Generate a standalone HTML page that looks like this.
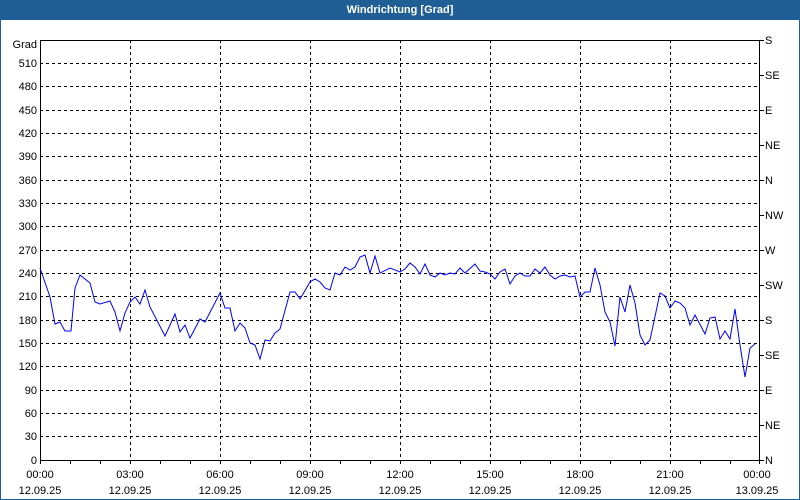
<!DOCTYPE html>
<html><head><meta charset="utf-8"><style>
html,body{margin:0;padding:0;background:#fff}
#w{position:relative;width:798px;height:498px;border:1px solid #1f5f96;overflow:hidden;background:#fff}
#t{height:19px;background:#1f5f96;color:#fff;font:bold 11px "Liberation Sans",sans-serif;text-align:center;line-height:18px}
svg{position:absolute;left:-1px;top:-1px}
text{font-family:"Liberation Sans",sans-serif;font-size:11px;fill:#000}
</style></head><body>
<div id="w"><div id="t">Windrichtung [Grad]</div>
<svg width="800" height="500" viewBox="0 0 800 500">
<g stroke="#000" stroke-width="1" stroke-dasharray="3,3" shape-rendering="crispEdges">
<line x1="40" x2="760" y1="63.5" y2="63.5"/><line x1="40" x2="760" y1="86.5" y2="86.5"/><line x1="40" x2="760" y1="110.5" y2="110.5"/><line x1="40" x2="760" y1="133.5" y2="133.5"/><line x1="40" x2="760" y1="156.5" y2="156.5"/><line x1="40" x2="760" y1="180.5" y2="180.5"/><line x1="40" x2="760" y1="203.5" y2="203.5"/><line x1="40" x2="760" y1="226.5" y2="226.5"/><line x1="40" x2="760" y1="250.5" y2="250.5"/><line x1="40" x2="760" y1="273.5" y2="273.5"/><line x1="40" x2="760" y1="296.5" y2="296.5"/><line x1="40" x2="760" y1="320.5" y2="320.5"/><line x1="40" x2="760" y1="343.5" y2="343.5"/><line x1="40" x2="760" y1="366.5" y2="366.5"/><line x1="40" x2="760" y1="390.5" y2="390.5"/><line x1="40" x2="760" y1="413.5" y2="413.5"/><line x1="40" x2="760" y1="436.5" y2="436.5"/>
<line x1="130.5" x2="130.5" y1="40" y2="460"/><line x1="220.5" x2="220.5" y1="40" y2="460"/><line x1="310.5" x2="310.5" y1="40" y2="460"/><line x1="400.5" x2="400.5" y1="40" y2="460"/><line x1="490.5" x2="490.5" y1="40" y2="460"/><line x1="580.5" x2="580.5" y1="40" y2="460"/><line x1="670.5" x2="670.5" y1="40" y2="460"/>
</g>
<rect x="40.5" y="40.5" width="719" height="420" fill="none" stroke="#000" shape-rendering="crispEdges"/>
<g stroke="#000" shape-rendering="crispEdges">
<path d="M40.5 460v4M70.5 460v4M100.5 460v4M130.5 460v4M160.5 460v4M190.5 460v4M220.5 460v4M250.5 460v4M280.5 460v4M310.5 460v4M340.5 460v4M370.5 460v4M400.5 460v4M430.5 460v4M460.5 460v4M490.5 460v4M520.5 460v4M550.5 460v4M580.5 460v4M610.5 460v4M640.5 460v4M670.5 460v4M700.5 460v4M730.5 460v4M759.5 460v4"/>
<path d="M760 40.5h4M760 75.5h4M760 110.5h4M760 145.5h4M760 180.5h4M760 215.5h4M760 250.5h4M760 285.5h4M760 320.5h4M760 355.5h4M760 390.5h4M760 425.5h4M760 460.5h4"/>
</g>
<polyline fill="none" stroke="#0000ff" stroke-width="1" points="40,268 50,297 55,324 60,322 65,331 71,331 75,288 80,275 90,283 95,302 100,304 110,301 115,312 120,331 125,313 130,302 135,297 140,304 145,290 150,307 165,336 175,314 180,332 185,325 190,338 200,319 205,322 220,293 225,308 230,308 235,331 240,323 245,328 250,343 255,345 260,359 265,340 270,341 275,333 280,329 290,292 295,292 300,299 310,282 315,279 320,282 325,288 330,290 335,273 340,275 345,267 350,270 355,267 360,257 365,255 370,273 375,256 380,273 390,268 400,272 405,269 410,263 415,267 420,274 425,264 430,275 435,277 440,273 445,275 450,273 455,274 460,268 465,273 475,264 480,271 485,272 490,274 495,279 500,272 505,269 510,284 515,276 520,273 525,276 530,276 535,269 540,273 545,267 550,275 555,279 560,276 565,275 570,277 575,276 580,297 585,292 590,292 595,268 600,285 605,312 610,322 615,346 620,297 625,312 630,285 635,303 640,335 645,345 650,340 660,293 665,296 670,308 675,301 680,303 685,308 690,325 695,315 705,334 710,318 715,317 720,339 725,331 730,339 735,309 740,345 745,377 750,348 755,344"/>
<g text-anchor="end">
<text x="37" y="48">Grad</text>
<text x="37" y="67">510</text><text x="37" y="90">480</text><text x="37" y="114">450</text><text x="37" y="137">420</text><text x="37" y="160">390</text><text x="37" y="184">360</text><text x="37" y="207">330</text><text x="37" y="230">300</text><text x="37" y="254">270</text><text x="37" y="277">240</text><text x="37" y="300">210</text><text x="37" y="324">180</text><text x="37" y="347">150</text><text x="37" y="370">120</text><text x="37" y="394">90</text><text x="37" y="417">60</text><text x="37" y="440">30</text><text x="37" y="464">0</text>
</g>
<g>
<text x="765" y="44">S</text><text x="765" y="79">SE</text><text x="765" y="114">E</text><text x="765" y="149">NE</text><text x="765" y="184">N</text><text x="765" y="219">NW</text><text x="765" y="254">W</text><text x="765" y="289">SW</text><text x="765" y="324">S</text><text x="765" y="359">SE</text><text x="765" y="394">E</text><text x="765" y="429">NE</text><text x="765" y="464">N</text>
</g>
<g text-anchor="middle">
<text x="40" y="478">00:00</text><text x="130" y="478">03:00</text><text x="220" y="478">06:00</text><text x="310" y="478">09:00</text><text x="400" y="478">12:00</text><text x="490" y="478">15:00</text><text x="580" y="478">18:00</text><text x="670" y="478">21:00</text><text x="757" y="478">00:00</text>
<text x="40" y="494">12.09.25</text><text x="130" y="494">12.09.25</text><text x="220" y="494">12.09.25</text><text x="310" y="494">12.09.25</text><text x="400" y="494">12.09.25</text><text x="490" y="494">12.09.25</text><text x="580" y="494">12.09.25</text><text x="670" y="494">12.09.25</text><text x="757" y="494">13.09.25</text>
</g>
</svg></div>
</body></html>
